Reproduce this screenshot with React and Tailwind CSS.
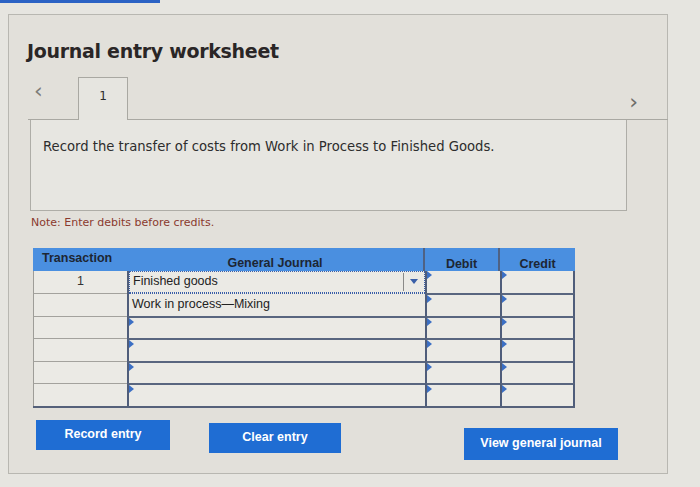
import React from "react";

const Flag = () => (
  <span className="absolute left-0 top-0 w-0 h-0 border-t-[4px] border-b-[4px] border-l-[5px] border-t-transparent border-b-transparent border-l-[#3b6fc4]" />
);

export default function App() {
  const rows = [0, 1, 2, 3, 4, 5];
  return (
    <div className="w-[700px] h-[487px] bg-[#e6e5e0] overflow-hidden relative" style={{ fontFamily: '"DejaVu Sans", Verdana, sans-serif' }}>
      <div className="h-[3px] w-[160px] bg-[#2b62c4]" />
      <div className="ml-[8px] mt-[11px] w-[660px] h-[460px] border border-[#b8b7b1] bg-[#e2e0da] flex flex-col">
        <div className="mt-[24px] ml-[18px] text-[19px] font-bold text-[#2a2626] leading-[24px] tracking-[-0.3px]">
          Journal entry worksheet
        </div>
        {/* tab strip */}
        <div className="mt-[14px] ml-[19px] mr-[-1px] h-[43px] flex items-end border-b border-[#a9a8a2] relative">
          <div className="w-[50px] h-[43px] flex items-start pt-[4px] pl-[6px] text-[22px] text-[#7d7c78] leading-[22px]">&lsaquo;</div>
          <div className="w-[50px] h-[43px] border border-b-0 border-[#a9a8a2] bg-[#e6e5e0] mb-[-1px] flex justify-center pt-[9px] text-[12px] text-[#2c2c2c]">1</div>
          <div className="flex-1" />
          <div className="absolute right-[30px] top-[14px] text-[22px] leading-[22px] text-[#6e6d69]">&rsaquo;</div>
        </div>
        <div className="ml-[21px] w-[597px] h-[91px] border border-t-0 border-[#aeada7] bg-[#e7e6e1] pl-[12px] pt-[17px] text-[13.2px] text-[#2d2d2d]">
          Record the transfer of costs from Work in Process to Finished Goods.
        </div>
        <div className="ml-[22px] mt-[4px] text-[11px] text-[#8a3a2e]">Note: Enter debits before credits.</div>
        {/* table */}
        <div className="ml-[24px] mt-[16px] w-[542px] text-[12.5px]" style={{ fontFamily: '"Liberation Sans", Arial, sans-serif' }}>
          <div className="flex h-[23px] bg-[#4a8fe0] text-[#1d2633] font-bold">
            <div className="w-[94px] pl-[9px] pt-[1px]">Transaction</div>
            <div className="w-[298px] flex justify-center pt-[6px] border-r-2 border-[#4f6284]">General Journal</div>
            <div className="w-[75px] flex justify-center pt-[7px] border-r-2 border-[#4f6284]">Debit</div>
            <div className="w-[75px] flex justify-center pt-[7px]">Credit</div>
          </div>
          <div className="border-b-2 border-[#55617a]">
            {rows.map((r) => (
              <div key={r} className="flex h-[22.5px]">
                <div className={`w-[94px] bg-[#ebeae5] border-l border-[#9e9d98] flex justify-center items-center text-[#333] ${r > 0 ? "border-t border-t-[#a3a29d]" : ""}`}>
                  {r === 0 ? "1" : ""}
                </div>
                <div className={`w-[298px] relative bg-[#ebeae5] border-l-2 border-[#4f5d7a] ${r > 1 ? "border-t-2 border-t-[#59667f]" : ""}`}>
                  {r === 0 && (
                    <div className="absolute inset-0 border border-dotted border-[#3a5fa8] flex items-center">
                      <span className="pl-[3px] text-[#222]">Finished goods</span>
                      <div className="flex-1" />
                      <div className="h-[18px] border-l border-[#8a8a88]" />
                      <span className="w-0 h-0 mx-[6px] border-l-[4px] border-r-[4px] border-t-[5px] border-l-transparent border-r-transparent border-t-[#3a5fa8]" />
                    </div>
                  )}
                  {r === 1 && (
                    <div className="absolute inset-0 border-t border-dotted border-[#3a5fa8] flex items-center">
                      <span className="pl-[3px] text-[#222]">Work in process—Mixing</span>
                    </div>
                  )}
                  {r > 1 && <Flag />}
                </div>
                <div className={`w-[75px] relative bg-[#ebeae5] border-l-2 border-[#4f5d7a] ${r > 0 ? "border-t-2 border-t-[#59667f]" : ""}`}>
                  <Flag />
                </div>
                <div className={`w-[75px] relative bg-[#ebeae5] border-l-2 border-r-2 border-[#4f5d7a] ${r > 0 ? "border-t-2 border-t-[#59667f]" : ""}`}>
                  <Flag />
                </div>
              </div>
            ))}
          </div>
        </div>
        {/* buttons */}
        <div className="mt-[12px] ml-[27px] flex items-start text-white font-bold text-[12.5px]" style={{ fontFamily: '"Liberation Sans", Arial, sans-serif' }}>
          <div className="w-[134px] h-[30px] bg-[#1f6dd3] flex items-center justify-center">Record entry</div>
          <div className="ml-[39px] mt-[3px] w-[132px] h-[30px] bg-[#1f6dd3] flex items-center justify-center">Clear entry</div>
          <div className="ml-[123px] mt-[8px] w-[154px] h-[32px] bg-[#1f6dd3] flex items-center justify-center">View general journal</div>
        </div>
      </div>
    </div>
  );
}
